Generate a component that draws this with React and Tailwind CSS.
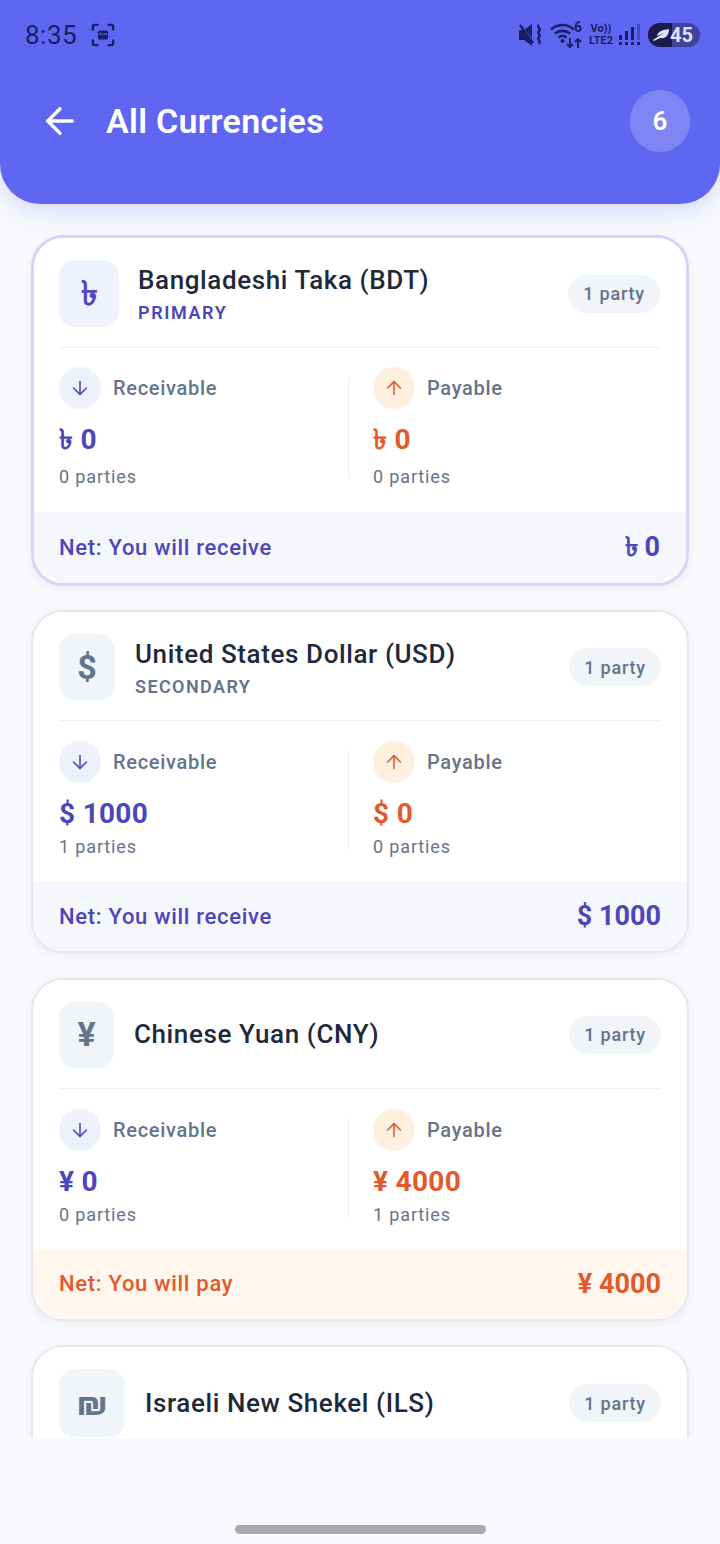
import { ArrowLeft, ArrowDown, ArrowUp } from 'lucide-react';

const CURRENCIES = [
  {
    name: 'Bangladeshi Taka (BDT)', symbol: '৳', tag: 'PRIMARY', primary: true,
    iconBox: 'w-[60px] h-[67px] bg-[#eff2fd] text-[#5149c0]', nameGap: 'ml-[19px] pt-[2px]',
    tagClass: 'mt-[4px] tracking-[1.6px] text-[#4c46b8]',
    pad: 'pl-[25px] pr-[26px]', statsPad: 'pt-[19px] pb-[17px]', amountGap: 'mt-[13px]', partiesGap: 'mt-[1px]',
    footerH: 'h-[71px]',
    rec: '0', recParties: 0, pay: '0', payParties: 0, net: '0', pays: false,
  },
  {
    name: 'United States Dollar (USD)', symbol: '$', tag: 'SECONDARY',
    iconBox: 'w-[56px] h-[66px] bg-[#f1f4f9] text-[#64748b]', nameGap: 'ml-[20px] pt-[2px]',
    tagClass: 'mt-[4px] tracking-[1.4px] text-[#64748b]',
    pad: 'px-[26px]', statsPad: 'pt-[20px] pb-[16px]', amountGap: 'mt-[13px]', partiesGap: 'mt-[-3px]',
    footerH: 'h-[70px]',
    rec: '1000', recParties: 1, pay: '0', payParties: 0, net: '1000', pays: false,
  },
  {
    name: 'Chinese Yuan (CNY)', symbol: '¥',
    iconBox: 'w-[55px] h-[66px] bg-[#f1f4f9] text-[#64748b]', nameGap: 'ml-[20px]',
    pad: 'px-[26px]', statsPad: 'pt-[20px] pb-[16px]', amountGap: 'mt-[13px]', partiesGap: 'mt-[-3px]',
    footerH: 'h-[70px]',
    rec: '0', recParties: 0, pay: '4000', payParties: 1, net: '4000', pays: true,
  },
  {
    // only the top of this card is on screen
    name: 'Israeli New Shekel (ILS)', symbol: '₪', cut: true,
    iconBox: 'w-[66px] h-[68px] bg-[#f1f4f9] text-[#64748b]', nameGap: 'ml-[20px]',
    pad: 'px-[26px]',
  },
];

function StatusBar() {
  return (
    <div className="flex items-center justify-between h-[70px] pl-[25px] pr-[20px] text-[#1a1f66]">
      <div className="flex items-center gap-[14px]">
        <span className="text-[26px] leading-none tracking-[0.5px]">8:35</span>
        <svg width="24" height="24" viewBox="0 0 26 26" fill="none" stroke="currentColor" strokeWidth="2.6" strokeLinecap="round">
          <path d="M2 7V4a2 2 0 0 1 2-2h3M19 2h3a2 2 0 0 1 2 2v3M24 19v3a2 2 0 0 1-2 2h-3M7 24H4a2 2 0 0 1-2-2v-3" />
          <rect x="7.5" y="8" width="11" height="10" rx="2" fill="currentColor" stroke="none" />
          <path d="M9 12h3M14 12h3" stroke="#5f66f1" strokeWidth="1.4" />
        </svg>
      </div>
      <div className="flex items-center">
        {/* muted + vibrate */}
        <svg width="24" height="22" viewBox="0 0 24 22" fill="currentColor">
          <path d="M0 6h5l8-6v22l-8-6H0z" />
          <path d="M1 0l15 19" stroke="#5f66f1" strokeWidth="1.2" />
          <path d="M1 1l13 18" stroke="currentColor" strokeWidth="2.4" />
          <path d="M20 1c-3 2 3 4 0 6s3 4 0 6 3 4 0 7" fill="none" stroke="currentColor" strokeWidth="2.4" />
        </svg>
        {/* wifi with the 6 and the traffic arrows */}
        <div className="relative ml-[7px] w-[32px] h-[24px]">
          <svg className="absolute left-0 top-0" width="25" height="20" viewBox="0 0 25 20" fill="none" stroke="currentColor" strokeWidth="2.6">
            <path d="M1 6.5c7-6 16-6 23 0M5 10.5c4.500-3.500 10.500-3.500 15 0M8.500 14.500c2.500-2 5.500-2 8 0" />
            <circle cx="12.500" cy="18" r="2" fill="currentColor" stroke="none" />
          </svg>
          <span className="absolute right-0 top-[-3px] text-[14px] font-bold leading-none">6</span>
          <svg className="absolute right-0 bottom-[-1px]" width="16" height="10" viewBox="0 0 16 10" fill="none" stroke="currentColor" strokeWidth="2">
            <path d="M4 0v9M1 6l3 3 3-3M12 10V1M9 4l3-3 3 3" />
          </svg>
        </div>
        <div className="flex flex-col items-center ml-[7px] text-[11px] font-bold leading-[12px]">
          <span>Vo))</span>
          <span>LTE2</span>
        </div>
        <svg className="ml-[6px]" width="21" height="22" viewBox="0 0 21 22" fill="currentColor">
          <rect x="0" y="11" width="3" height="5" />
          <rect x="0" y="18" width="3" height="3" />
          <rect x="6" y="7" width="3" height="9" />
          <rect x="6" y="18" width="3" height="3" />
          <rect x="12" y="3" width="3" height="13" />
          <rect x="12" y="18" width="3" height="3" />
          <rect x="18" y="0" width="3" height="16" opacity="0.35" />
          <rect x="18" y="18" width="3" height="3" />
        </svg>
        <div className="relative flex items-center ml-[8px] w-[52px] h-[24px] rounded-full bg-[#3f4399] overflow-hidden text-[#dfe1fb]">
          <div className="absolute left-0 top-0 h-full w-[24px] bg-[#1a1c4e]" />
          <svg className="relative ml-[5px]" width="16" height="12" viewBox="0 0 16 12" fill="#dfe1fb">
            <path d="M4 7C5 2 10 1 16 0c0 6-3 10-9 9L1 12l-1-1 6-4 5-3-7 3z" />
          </svg>
          <span className="relative ml-[1px] text-[20px] font-bold leading-none">45</span>
        </div>
      </div>
    </div>
  );
}

function Stat({ title, symbol, amount, parties, payable, amountGap, partiesGap }) {
  return (
    <div className="flex flex-col">
      <div className="flex items-center gap-[12px]">
        <div className={`flex items-center justify-center w-[42px] h-[42px] rounded-full ${payable ? 'bg-[#fdf0de] text-[#e2592b]' : 'bg-[#eef0fc] text-[#4c46b8]'}`}>
          {payable ? <ArrowUp size={22} strokeWidth={1.7} /> : <ArrowDown size={22} strokeWidth={1.7} />}
        </div>
        <span className="text-[20px] font-medium text-[#64748b] tracking-[0.7px]">{title}</span>
      </div>
      <div className={`${amountGap} text-[28px] leading-[36px] font-bold tracking-[0.3px] ${payable ? 'text-[#e2592b]' : 'text-[#4c46b8]'}`}>
        {symbol} {amount}
      </div>
      <div className={`${partiesGap} text-[18px] leading-[36px] text-[#64748b] tracking-[0.85px]`}>{parties} parties</div>
    </div>
  );
}

function CurrencyCard({ c }) {
  return (
    <div className={`shrink-0 rounded-[32px] bg-white overflow-hidden shadow-[0_3px_10px_rgba(30,41,90,0.05)] ${c.primary ? 'border-[3px] border-[#d6d6f4]' : 'border-2 border-[#e6e8f1]'} ${c.cut ? 'min-h-[343px]' : ''}`}>
      <div className={`${c.pad} pt-[22px]`}>
        <div className={`flex items-center pb-[20px] ${c.cut ? '' : 'border-b border-[#eef0f4]'}`}>
          <div className={`flex items-center justify-center rounded-[16px] text-[34px] font-bold ${c.iconBox}`}>{c.symbol}</div>
          <div className={`flex-1 ${c.nameGap}`}>
            <div className="text-[26px] leading-[33px] font-medium text-[#1e293b] tracking-[0.6px]">{c.name}</div>
            {c.tag && (
              <div className={`text-[18px] leading-[24px] font-semibold ${c.tagClass}`}>{c.tag}</div>
            )}
          </div>
          <span className="px-[15px] h-[38px] flex items-center rounded-full bg-[#f1f4f9] text-[18px] font-medium text-[#64748b] tracking-[0.8px]">1 party</span>
        </div>
      </div>
      {!c.cut && (
        <>
          <div className={`flex ${c.pad} ${c.statsPad}`}>
            <div className="w-[289px]">
              <Stat title="Receivable" symbol={c.symbol} amount={c.rec} parties={c.recParties} amountGap={c.amountGap} partiesGap={c.partiesGap} />
            </div>
            <div className="w-px mt-[10px] mb-[16px] bg-[#eef0f4]" />
            <div className="pl-[24px]">
              <Stat title="Payable" symbol={c.symbol} amount={c.pay} parties={c.payParties} payable amountGap={c.amountGap} partiesGap={c.partiesGap} />
            </div>
          </div>
          <div className={`flex items-center justify-between ${c.footerH} ${c.pad} ${c.pays ? 'bg-[#fff7ed] text-[#e2592b]' : 'bg-[#f5f7fd] text-[#4c46b8]'}`}>
            <span className="text-[22px] font-medium tracking-[0.7px]">{c.pays ? 'Net: You will pay' : 'Net: You will receive'}</span>
            <span className="text-[27px] font-bold">{c.symbol} {c.net}</span>
          </div>
        </>
      )}
    </div>
  );
}

export default function App() {
  return (
    <div className="flex flex-col h-[1544px] overflow-hidden bg-[#f8f9fc] font-['Roboto','Noto_Sans',sans-serif]">
      <header className="relative z-10 shrink-0 h-[204px] rounded-b-[40px] bg-[#5f66f1] shadow-[0_6px_24px_rgba(95,102,241,0.22)]">
        <StatusBar />
        <div className="flex items-center justify-between pl-[39px] pr-[30px] pt-[20px]">
          <div className="flex items-center gap-[25px] text-white">
            <ArrowLeft size={42} strokeWidth={1.9} />
            <h1 className="text-[34px] font-semibold leading-none tracking-[0.3px]">All Currencies</h1>
          </div>
          <div className="flex items-center justify-center w-[60px] h-[62px] rounded-full bg-[#7f85f4] text-white text-[26px] font-semibold">6</div>
        </div>
      </header>
      <main className="h-[1234px] shrink-0 overflow-hidden flex flex-col gap-[24.4px] px-[31px] pt-[31px]">
        {CURRENCIES.map((c) => (
          <CurrencyCard key={c.name} c={c} />
        ))}
      </main>
      <div className="flex-1 flex items-end justify-center pb-[10px]">
        <div className="w-[251px] h-[9px] rounded-full bg-[#a9a9ad]" />
      </div>
    </div>
  );
}
